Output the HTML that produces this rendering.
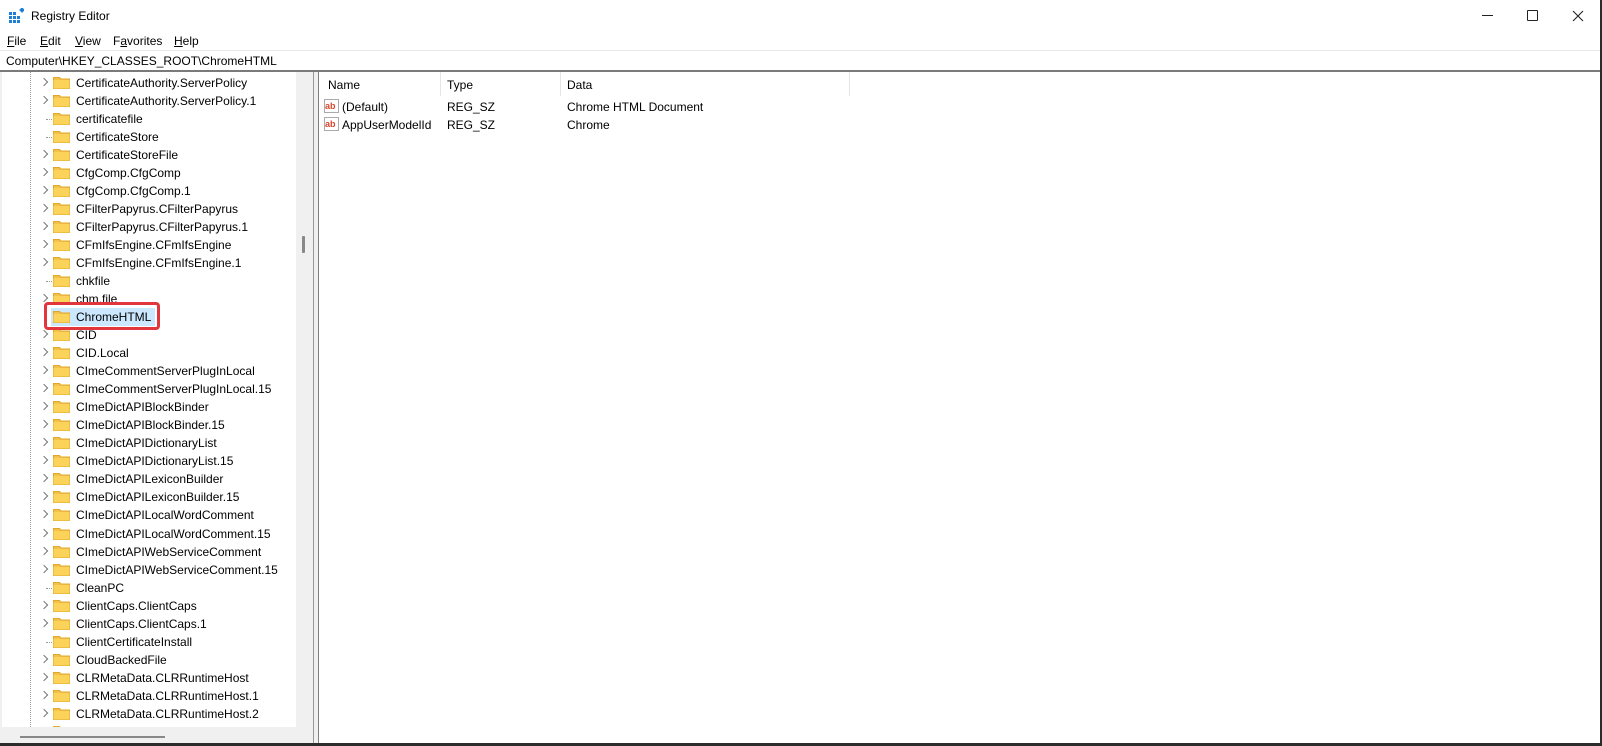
<!DOCTYPE html>
<html><head><style>
*{margin:0;padding:0;box-sizing:border-box}
body{width:1602px;height:746px;background:#2b2b2b;position:relative;overflow:hidden;font-family:"Liberation Sans",Arial,sans-serif;font-size:12px;color:#000}
.win{position:absolute;left:0;top:0;width:1600px;height:743px;background:#f0f0f0;border-right:1px solid #555}
.title{position:absolute;left:0;top:0;width:1600px;height:32px;background:#fff}
.menu{position:absolute;left:0;top:30px;width:1600px;height:20px;background:#fff}
.menu span{position:absolute;top:4px}
.addr{position:absolute;left:0;top:50px;width:1600px;height:20px;background:#fff;border-top:1px solid #e8e8e8}
.sep{position:absolute;left:0;top:70px;width:1600px;height:2px;background:#7a7a7a}
.tree{position:absolute;left:2px;top:72px;width:294px;height:655px;background:#fff;overflow:hidden}
.vsb{position:absolute;left:296px;top:72px;width:17px;height:655px;background:#f0f0f0}
.row{position:absolute;left:0;height:18px;white-space:nowrap}
.row .t{position:absolute;left:74px;top:2px}
.chev{position:absolute;left:39px;top:5px;width:6px;height:6px;border-right:1.3px solid #777;border-top:1.3px solid #777;transform:rotate(45deg)}
.fold{position:absolute;left:51px;top:2px;width:17px;height:13px}
.right{position:absolute;left:318px;top:72px;width:1282px;height:671px;background:#fff;border-left:1px solid #808080}
.hdr{position:absolute;top:6px}
.cd{position:absolute;top:0;width:1px;height:24px;background:#e5e5e5}
</style></head><body>
<div class="win">
<div class="title">
<svg style="position:absolute;left:9px;top:8px" width="15" height="15" viewBox="0 0 15 15"><g fill="#1e7fd6"><rect x="0" y="4" width="3" height="3"/><rect x="4" y="4" width="3" height="3"/><rect x="0" y="8" width="3" height="3"/><rect x="4" y="8" width="3" height="3"/><rect x="8" y="8" width="3" height="3"/><rect x="0" y="12" width="3" height="3"/><rect x="4" y="12" width="3" height="3"/><rect x="8" y="12" width="3" height="3"/><rect x="11" y="0" width="4" height="4" transform="rotate(45 13 2)"/></g></svg>
<div style="position:absolute;left:31px;top:9px">Registry Editor</div>
<div style="position:absolute;left:1482px;top:15px;width:11px;height:1px;background:#222"></div>
<div style="position:absolute;left:1527px;top:10px;width:11px;height:11px;border:1px solid #222;border-radius:1px"></div>
<svg style="position:absolute;left:1572px;top:10px" width="12" height="12"><path d="M1 1L11 11M11 1L1 11" stroke="#222" stroke-width="1.1"/></svg>
</div>
<div class="menu"><span style="left:7px"><u>F</u>ile</span><span style="left:40px"><u>E</u>dit</span><span style="left:75px"><u>V</u>iew</span><span style="left:113px">F<u>a</u>vorites</span><span style="left:174px"><u>H</u>elp</span></div>
<div class="addr"><div style="position:absolute;left:6px;top:3px">Computer\HKEY_CLASSES_ROOT\ChromeHTML</div></div>
<div class="sep"></div>
<div class="tree">
<div style="position:absolute;left:28px;top:0;height:655px;border-left:1px dotted #999"></div>
<div id="rows"></div>
<div style="position:absolute;left:42px;top:230px;width:116px;height:28px;border:3px solid #e0363c;border-radius:4px"></div>
</div>
<div style="position:absolute;left:0;top:727px;width:313px;height:16px;background:#f0f0f0"></div>
<div style="position:absolute;left:20px;top:736px;width:145px;height:2px;background:#888"></div>
<div class="vsb"><div style="position:absolute;left:6px;top:164px;width:3px;height:17px;background:#888;border-radius:1px"></div></div>
<div style="position:absolute;left:313px;top:72px;width:1px;height:671px;background:#999"></div>
<div class="right">
<div class="hdr" style="left:9px">Name</div><div class="cd" style="left:121px"></div>
<div class="hdr" style="left:128px">Type</div><div class="cd" style="left:241px"></div>
<div class="hdr" style="left:248px">Data</div><div class="cd" style="left:530px"></div>
<svg style="position:absolute;left:5px;top:27px" width="15" height="14"><rect x="0.5" y="0.5" width="14" height="13" fill="#fff" stroke="#aaa"/><text x="1" y="10" font-size="9" font-weight="bold" fill="#d9452b" font-family="Liberation Sans">ab</text></svg>
<div style="position:absolute;left:23px;top:28px">(Default)</div><div style="position:absolute;left:128px;top:28px">REG_SZ</div><div style="position:absolute;left:248px;top:28px">Chrome HTML Document</div>
<svg style="position:absolute;left:5px;top:45px" width="15" height="14"><rect x="0.5" y="0.5" width="14" height="13" fill="#fff" stroke="#aaa"/><text x="1" y="10" font-size="9" font-weight="bold" fill="#d9452b" font-family="Liberation Sans">ab</text></svg>
<div style="position:absolute;left:23px;top:46px">AppUserModelId</div><div style="position:absolute;left:128px;top:46px">REG_SZ</div><div style="position:absolute;left:248px;top:46px">Chrome</div>
</div>
</div>
<script>
var items=[["CertificateAuthority.ServerPolicy",1],["CertificateAuthority.ServerPolicy.1",1],["certificatefile",0],["CertificateStore",0],["CertificateStoreFile",1],["CfgComp.CfgComp",1],["CfgComp.CfgComp.1",1],["CFilterPapyrus.CFilterPapyrus",1],["CFilterPapyrus.CFilterPapyrus.1",1],["CFmIfsEngine.CFmIfsEngine",1],["CFmIfsEngine.CFmIfsEngine.1",1],["chkfile",0],["chm.file",1],["ChromeHTML",2],["CID",1],["CID.Local",1],["CImeCommentServerPlugInLocal",1],["CImeCommentServerPlugInLocal.15",1],["CImeDictAPIBlockBinder",1],["CImeDictAPIBlockBinder.15",1],["CImeDictAPIDictionaryList",1],["CImeDictAPIDictionaryList.15",1],["CImeDictAPILexiconBuilder",1],["CImeDictAPILexiconBuilder.15",1],["CImeDictAPILocalWordComment",1],["CImeDictAPILocalWordComment.15",1],["CImeDictAPIWebServiceComment",1],["CImeDictAPIWebServiceComment.15",1],["CleanPC",0],["ClientCaps.ClientCaps",1],["ClientCaps.ClientCaps.1",1],["ClientCertificateInstall",0],["CloudBackedFile",1],["CLRMetaData.CLRRuntimeHost",1],["CLRMetaData.CLRRuntimeHost.1",1],["CLRMetaData.CLRRuntimeHost.2",1],["",1]];
var h="";
var fold='<svg class="fold" viewBox="0 0 17 13"><path d="M0.5 1.5h6l1.5 1.5h8.5v9.5h-16z" fill="#f4c24a" stroke="#e0a82a"/><rect x="0.5" y="4" width="16" height="8.5" fill="#fcd35a"/></svg>';
items.forEach(function(it,i){var y=2+Math.round(i*18.02);
if(it[1]==2){h+='<div style="position:absolute;left:49px;top:'+(y)+'px;width:104px;height:18px;background:#cce8ff"></div>';}
h+='<div class="row" style="top:'+y+'px;width:294px">'+(it[1]==1?'<div class="chev"></div>':(it[1]==0?'<div style="position:absolute;left:44px;top:9px;width:6px;border-top:1px dotted #999"></div>':''))+fold+'<span class="t">'+it[0]+'</span></div>';});
document.getElementById("rows").innerHTML=h;
</script>
</body></html>
